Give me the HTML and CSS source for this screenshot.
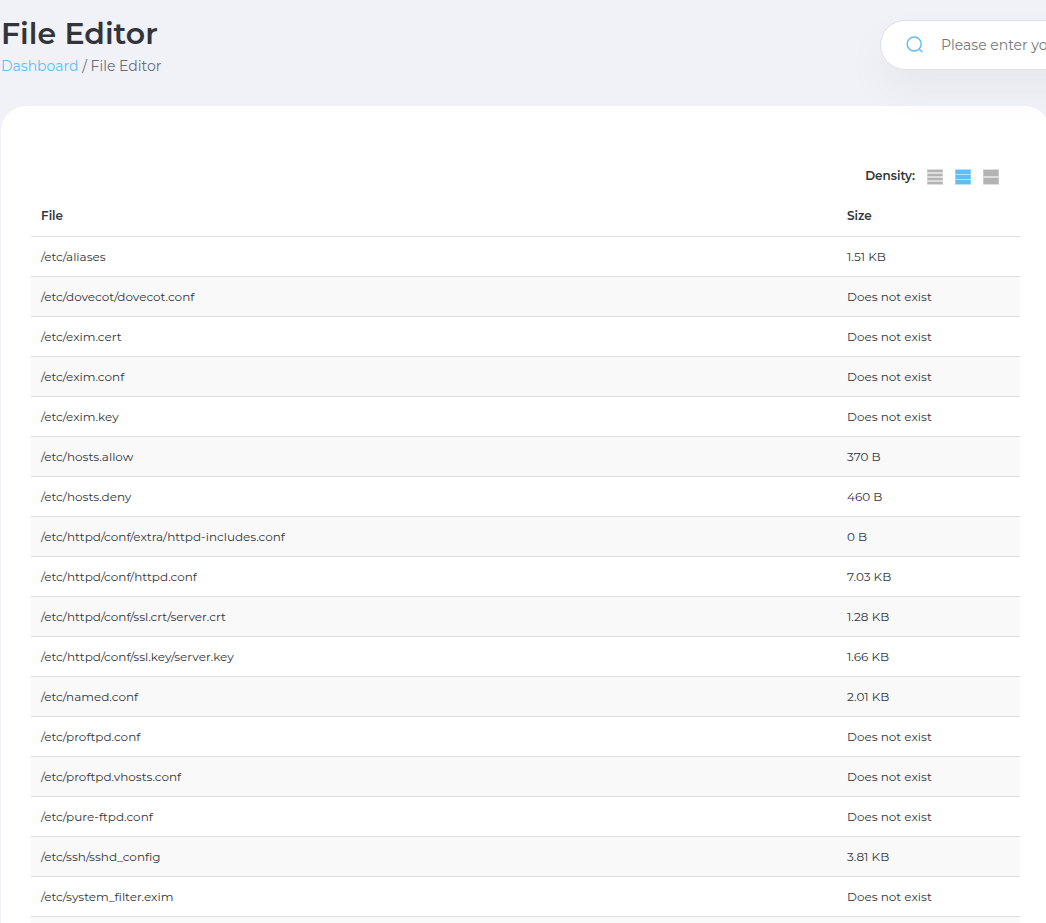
FILE: index.html
```html
<!DOCTYPE html>
<html lang="en">
<head>
<meta charset="utf-8">
<title>File Editor</title>
<link rel="stylesheet" href="styles.css">
</head>
<body>
<div class="page">
  <header class="page-header">
    <div class="heading">
      <h1 class="title">File Editor</h1>
      <nav class="breadcrumb" aria-label="Breadcrumb"><a href="#">Dashboard</a> / <span>File Editor</span></nav>
    </div>
    <label class="search">
      <svg class="search-icon" viewBox="0 0 18 18" aria-hidden="true"><circle cx="8.2" cy="8" r="7"/><path d="M13 13l3.5 3.3"/></svg>
      <input class="search-input" type="text" aria-label="Search" placeholder="Please enter your search criteria">
    </label>
  </header>
  <main class="card">
    <div class="density">
      <span class="density-label">Density:</span>
      <button class="density-button" type="button" aria-label="Compact"><svg viewBox="0 0 16 16"><path class="soft" d="M0 0h16v16H0z"/><path d="M.5 1h15v2H.5zM.5 5h15v2H.5zM.5 9h15v2H.5zM.5 13h15v2H.5z"/></svg></button>
      <button class="density-button active" type="button" aria-label="Normal"><svg viewBox="0 0 16 16"><path class="soft" d="M0 0h16v16H0z"/><path d="M.5 1h15v4H.5zM.5 6h15v4H.5zM.5 11h15v4H.5z"/></svg></button>
      <button class="density-button" type="button" aria-label="Comfortable"><svg viewBox="0 0 16 16"><path class="soft" d="M0 0h16v16H0z"/><path d="M.5 1h15v6H.5zM.5 9h15v6H.5z"/></svg></button>
    </div>
    <table class="files">
      <thead><tr><th class="col-file" scope="col">File</th><th scope="col">Size</th></tr></thead>
      <tbody>
        <tr><td><a href="#">/etc/aliases</a></td><td>1.51 KB</td></tr>
        <tr><td><a href="#">/etc/dovecot/dovecot.conf</a></td><td>Does not exist</td></tr>
        <tr><td><a href="#">/etc/exim.cert</a></td><td>Does not exist</td></tr>
        <tr><td><a href="#">/etc/exim.conf</a></td><td>Does not exist</td></tr>
        <tr><td><a href="#">/etc/exim.key</a></td><td>Does not exist</td></tr>
        <tr><td><a href="#">/etc/hosts.allow</a></td><td>370 B</td></tr>
        <tr><td><a href="#">/etc/hosts.deny</a></td><td>460 B</td></tr>
        <tr><td><a href="#">/etc/httpd/conf/extra/httpd-includes.conf</a></td><td>0 B</td></tr>
        <tr><td><a href="#">/etc/httpd/conf/httpd.conf</a></td><td>7.03 KB</td></tr>
        <tr><td><a href="#">/etc/httpd/conf/ssl.crt/server.crt</a></td><td>1.28 KB</td></tr>
        <tr><td><a href="#">/etc/httpd/conf/ssl.key/server.key</a></td><td>1.66 KB</td></tr>
        <tr><td><a href="#">/etc/named.conf</a></td><td>2.01 KB</td></tr>
        <tr><td><a href="#">/etc/proftpd.conf</a></td><td>Does not exist</td></tr>
        <tr><td><a href="#">/etc/proftpd.vhosts.conf</a></td><td>Does not exist</td></tr>
        <tr><td><a href="#">/etc/pure-ftpd.conf</a></td><td>Does not exist</td></tr>
        <tr><td><a href="#">/etc/ssh/sshd_config</a></td><td>3.81 KB</td></tr>
        <tr><td><a href="#">/etc/system_filter.exim</a></td><td>Does not exist</td></tr>
        <tr><td></td><td></td></tr>
      </tbody>
    </table>
  </main>
</div>
</body>
</html>
```
FILE: styles.css
```css
* { box-sizing: border-box; }
body {
  margin: 0;
  background: #f1f2f7;
  color: #32353b;
  font: 400 12px/20px Montserrat, Inter, "Liberation Sans", sans-serif;
}
a { color: inherit; text-decoration: none; }
.page {
  height: 100vh;
  overflow: hidden;
  padding-left: 1px;
}
.page-header {
  position: relative;
  z-index: 1;
  display: flex;
  justify-content: space-between;
  align-items: flex-start;
  height: 106px;
  margin-right: -134px;
}
.heading { padding-top: 14px; }
.title {
  margin: 0;
  font-size: 30px;
  line-height: 40px;
  font-weight: 600;
}
.breadcrumb {
  font-size: 14px;
  line-height: 24px;
  color: #686d78;
}
.breadcrumb a { color: #61bdf8; }
.search {
  display: flex;
  align-items: center;
  gap: 15px;
  width: 300px;
  height: 50px;
  margin-top: 20px;
  padding: 0 25px;
  background: #fff;
  border: 1px solid #d9e1ea;
  border-radius: 25px;
  box-shadow: 0 20px 40px rgba(50, 60, 80, 0.06);
}
.search-icon {
  flex: none;
  width: 18px;
  height: 18px;
  fill: none;
  stroke: #61bdf8;
  stroke-width: 1.5;
}
.search-input {
  flex: 1;
  min-width: 0;
  border: 0;
  outline: 0;
  background: none;
  font: inherit;
  font-size: 14px;
}
.search-input::placeholder { color: #777; opacity: 1; }
.card {
  min-height: 100vh;
  margin-right: -4px;
  padding: 60px 30px;
  background: #fff;
  border-radius: 25px;
}
.density {
  display: flex;
  align-items: flex-end;
  justify-content: flex-end;
  gap: 12px;
  height: 19px;
  margin: 0 21px 11px 0;
}
.density-label { font-weight: 600; line-height: 18px; }
.density-button {
  width: 16px;
  height: 16px;
  padding: 0;
  border: 0;
  background: none;
  color: #b3b3b3;
}
.density-button.active { color: #61bdf8; }
.density-button svg { display: block; width: 16px; height: 16px; fill: currentColor; }
.soft { opacity: 0.45; }
.files {
  width: 100%;
  border-collapse: separate;
  border-spacing: 0;
  table-layout: fixed;
}
.files th, .files td {
  height: 40px;
  padding: 0 10px;
  border-bottom: 1px solid #dedede;
  text-align: left;
  vertical-align: middle;
}
.files th { height: 41px; font-weight: 600; }
.files tbody tr:nth-child(even) { background: #f9f9f9; }
.col-file { width: 81.5%; }
```
